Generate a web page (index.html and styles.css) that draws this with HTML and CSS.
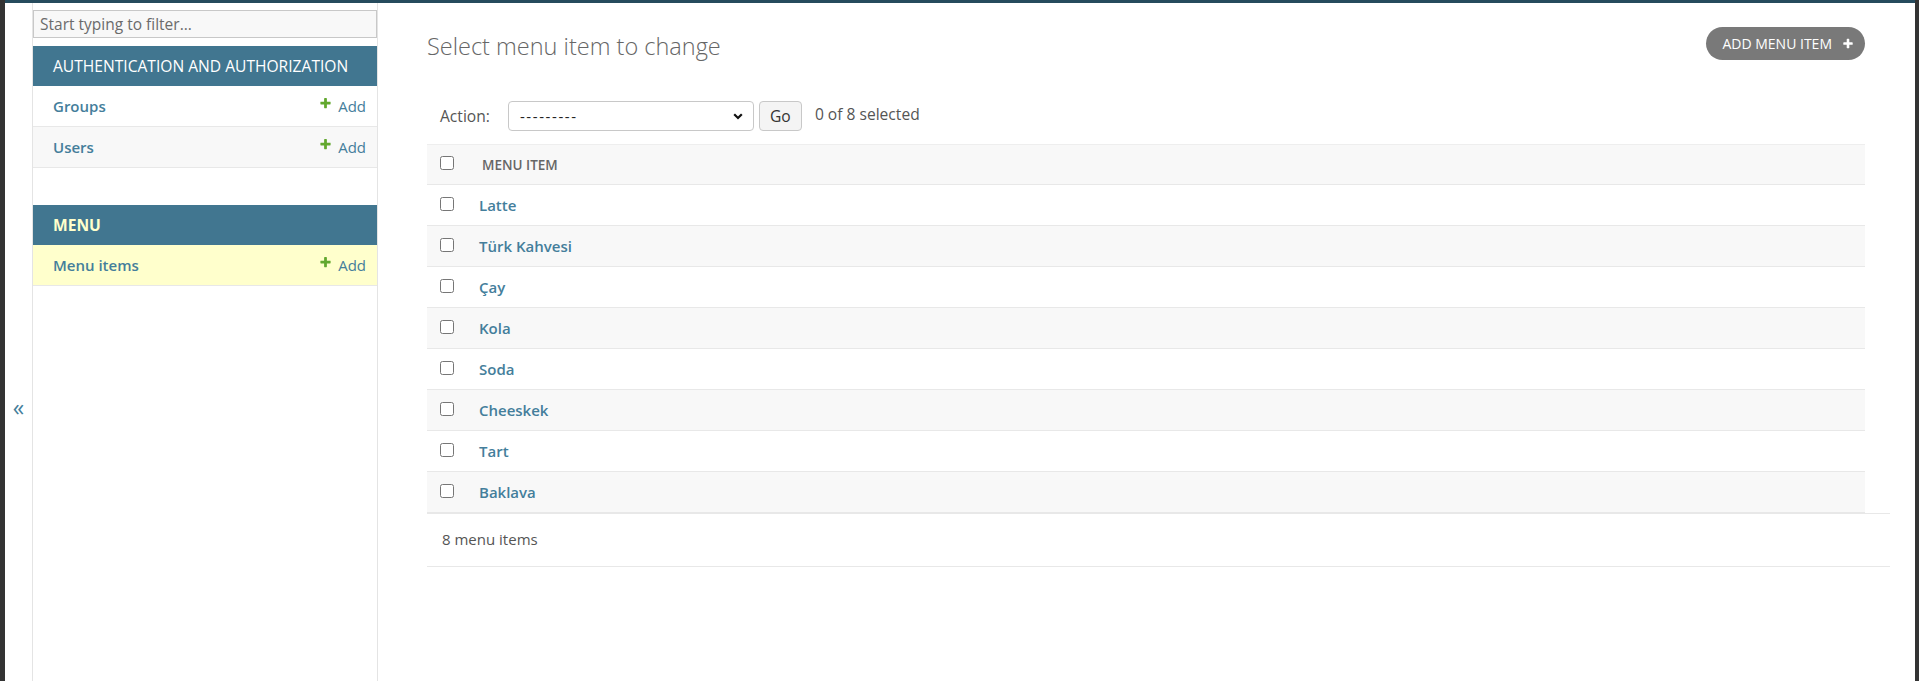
FILE: index.html
```html
<!DOCTYPE html>
<html lang="en">
<head>
<meta charset="utf-8">
<title>Select menu item to change</title>
<link rel="stylesheet" href="styles.css">
</head>
<body>
<div class="window">
  <div class="topbar"></div>
  <div class="layout">
    <div class="toggle"><span>«</span></div>
    <nav class="sidebar">
      <input class="filter" type="text" placeholder="Start typing to filter...">
      <div class="module">
        <div class="caption">Authentication and Authorization</div>
        <div class="srow"><a class="model">Groups</a><a class="addlink"><svg class="plus" viewBox="0 0 1792 1792"><path d="M1600 736v192q0 40-28 68t-68 28h-416v416q0 40-28 68t-68 28h-192q-40 0-68-28t-28-68v-416h-416q-40 0-68-28t-28-68v-192q0-40 28-68t68-28h416v-416q0-40 28-68t68-28h192q40 0 68 28t28 68v416h416q40 0 68 28t28 68z"/></svg>Add</a></div>
        <div class="srow alt"><a class="model">Users</a><a class="addlink"><svg class="plus" viewBox="0 0 1792 1792"><path d="M1600 736v192q0 40-28 68t-68 28h-416v416q0 40-28 68t-68 28h-192q-40 0-68-28t-28-68v-416h-416q-40 0-68-28t-28-68v-192q0-40 28-68t68-28h416v-416q0-40 28-68t68-28h192q40 0 68 28t28 68v416h416q40 0 68 28t28 68z"/></svg>Add</a></div>
      </div>
      <div class="module current">
        <div class="caption">Menu</div>
        <div class="srow cur"><a class="model">Menu items</a><a class="addlink"><svg class="plus" viewBox="0 0 1792 1792"><path d="M1600 736v192q0 40-28 68t-68 28h-416v416q0 40-28 68t-68 28h-192q-40 0-68-28t-28-68v-416h-416q-40 0-68-28t-28-68v-192q0-40 28-68t68-28h416v-416q0-40 28-68t68-28h192q40 0 68 28t28 68v416h416q40 0 68 28t28 68z"/></svg>Add</a></div>
      </div>
    </nav>
    <main class="content">
      <div class="head">
        <h1>Select menu item to change</h1>
        <a class="addbtn">Add menu item<svg class="wplus" viewBox="0 0 1792 1792"><path d="M1600 736v192q0 40-28 68t-68 28h-416v416q0 40-28 68t-68 28h-192q-40 0-68-28t-28-68v-416h-416q-40 0-68-28t-28-68v-192q0-40 28-68t68-28h416v-416q0-40 28-68t68-28h192q40 0 68 28t28 68v416h416q40 0 68 28t28 68z"/></svg></a>
      </div>
      <div class="actions">
        <span class="label">Action:</span>
        <div class="select"><span class="dash">---------</span><svg class="chev" viewBox="0 0 12 12"><path d="M2.2 4.2l3.8 3.8 3.8-3.8" fill="none" stroke="#111" stroke-width="2.2"/></svg></div>
        <button class="go">Go</button>
        <span class="counter">0 of 8 selected</span>
      </div>
      <table class="results">
        <thead>
          <tr><th class="cb"><input type="checkbox"></th><th class="name">Menu item</th></tr>
        </thead>
        <tbody>
          <tr><td class="cb"><input type="checkbox"></td><td class="name"><a>Latte</a></td></tr>
          <tr><td class="cb"><input type="checkbox"></td><td class="name"><a>Türk Kahvesi</a></td></tr>
          <tr><td class="cb"><input type="checkbox"></td><td class="name"><a>Çay</a></td></tr>
          <tr><td class="cb"><input type="checkbox"></td><td class="name"><a>Kola</a></td></tr>
          <tr><td class="cb"><input type="checkbox"></td><td class="name"><a>Soda</a></td></tr>
          <tr><td class="cb"><input type="checkbox"></td><td class="name"><a>Cheeskek</a></td></tr>
          <tr><td class="cb"><input type="checkbox"></td><td class="name"><a>Tart</a></td></tr>
          <tr><td class="cb"><input type="checkbox"></td><td class="name"><a>Baklava</a></td></tr>
        </tbody>
      </table>
      <p class="paginator">8 menu items</p>
    </main>
  </div>
</div>
</body>
</html>
```
FILE: styles.css
```css
html, body {
  margin: 0;
  padding: 0;
  background: #333;
}
body {
  font-family: "Open Sans", "Noto Sans", sans-serif;
  color: #333;
}
.window {
  width: 1910px;
  height: 681px;
  border-left: 5px solid #333;
  border-right: 4px solid #333;
  background: #fff;
  display: flex;
  flex-direction: column;
  overflow: hidden;
}
.topbar {
  height: 3px;
  flex: 0 0 3px;
  background: #264b5d;
}
.layout {
  flex: 1;
  display: flex;
}
.toggle {
  flex: 0 0 28px;
  border-right: 1px solid #e4e4e4;
  display: flex;
  justify-content: center;
  padding-top: 389px;
  box-sizing: border-box;
  color: #447e9b;
  font-size: 23px;
  line-height: 30px;
}
.sidebar {
  flex: 0 0 344px;
  border-right: 1px solid #e4e4e4;
  padding-top: 7px;
}
.filter {
  display: block;
  width: 100%;
  box-sizing: border-box;
  height: 28px;
  margin: 0 0 8px;
  padding: 0 6px;
  border: 1px solid #c8c8c8;
  background: #f8f8f8;
  font-family: "Open Sans", sans-serif;
  font-size: 15.5px;
  color: #333;
}
.filter::placeholder {
  color: #6b6b6b;
}
.module {
  margin-bottom: 37px;
}
.caption {
  height: 40px;
  line-height: 41px;
  padding-left: 20px;
  background: #417690;
  color: #fff;
  text-transform: uppercase;
  font-size: 15.6px;
}
.current .caption {
  color: #ffc;
  font-weight: 700;
}
.srow {
  height: 40px;
  border-bottom: 1px solid #e8e8e8;
  display: flex;
  align-items: center;
  justify-content: space-between;
  padding: 0 11px 0 20px;
  font-size: 15px;
}
.srow.alt {
  background: #f8f8f8;
}
.srow.cur {
  background: #ffc;
}
.model {
  color: #447e9b;
  font-weight: 600;
}
.addlink {
  color: #447e9b;
  display: flex;
  align-items: center;
}
.plus {
  width: 13px;
  height: 13px;
  fill: #62a82e;
  margin-right: 6px;
  margin-top: -6px;
}
.content {
  flex: 1;
  padding: 24px 50px 0 49px;
  min-width: 0;
}
.head {
  display: flex;
  justify-content: space-between;
  align-items: flex-start;
  height: 33px;
}
h1 {
  margin: 4px 0 0;
  font-size: 23.5px;
  font-weight: 300;
  line-height: 31px;
  color: #666;
}
.addbtn {
  display: flex;
  align-items: center;
  height: 33px;
  box-sizing: border-box;
  padding: 0 11px 0 16px;
  border-radius: 17px;
  background: #797979;
  color: #fff;
  text-transform: uppercase;
  font-size: 14px;
}
.wplus {
  width: 12px;
  height: 12px;
  fill: #fff;
  margin-left: 10px;
}
.actions {
  margin-top: 41px;
  height: 30px;
  display: flex;
  align-items: center;
  font-size: 15.6px;
  color: #555;
}
.label {
  margin-left: 13px;
  margin-right: 18px;
}
.select {
  width: 246px;
  height: 30px;
  box-sizing: border-box;
  border: 1px solid #c8c8c8;
  border-radius: 4px;
  display: flex;
  align-items: center;
  justify-content: space-between;
  padding: 0 9px 0 11px;
  color: #222;
  font-size: 15px;
}
.dash {
  letter-spacing: 1.6px;
}
.chev {
  width: 12px;
  height: 12px;
}
.go {
  margin-left: 5px;
  width: 43px;
  height: 30px;
  border: 1px solid #c8c8c8;
  border-radius: 4px;
  background: #f4f4f4;
  font-family: "Open Sans", sans-serif;
  font-size: 15.6px;
  color: #333;
  padding: 0;
}
.counter {
  margin-left: 13px;
  margin-top: -4px;
}
.results {
  margin-top: 13px;
  width: 100%;
  border-collapse: collapse;
}
.results th, .results td {
  padding: 0;
  text-align: left;
  vertical-align: middle;
}
.results thead tr {
  background: #f8f8f8;
  height: 40px;
  border-top: 1px solid #eee;
  border-bottom: 1px solid #e8e8e8;
}
.results tbody tr {
  height: 41px;
  border-bottom: 1px solid #e8e8e8;
}
.results tbody tr:nth-child(even) {
  background: #f8f8f8;
}
.results .cb {
  width: 52px;
}
.results .cb input {
  margin: 0 0 0 13px;
  display: block;
  width: 14px;
  height: 14px;
}
.results th.cb input {
  margin-top: -3px;
}
.results td.cb input {
  margin-top: -2px;
}
.results th.name {
  padding-left: 3px;
  font-size: 13.5px;
  font-weight: 600;
  text-transform: uppercase;
  color: #666;
}
.results td.name {
  font-size: 15px;
}
.results td.name a {
  color: #447e9b;
  font-weight: 600;
}
.paginator {
  margin: 0 -25px 0 0;
  height: 52px;
  line-height: 50px;
  border-top: 1px solid #e8e8e8;
  border-bottom: 1px solid #e8e8e8;
  padding-left: 15px;
  font-size: 15px;
  color: #555;
}
```
